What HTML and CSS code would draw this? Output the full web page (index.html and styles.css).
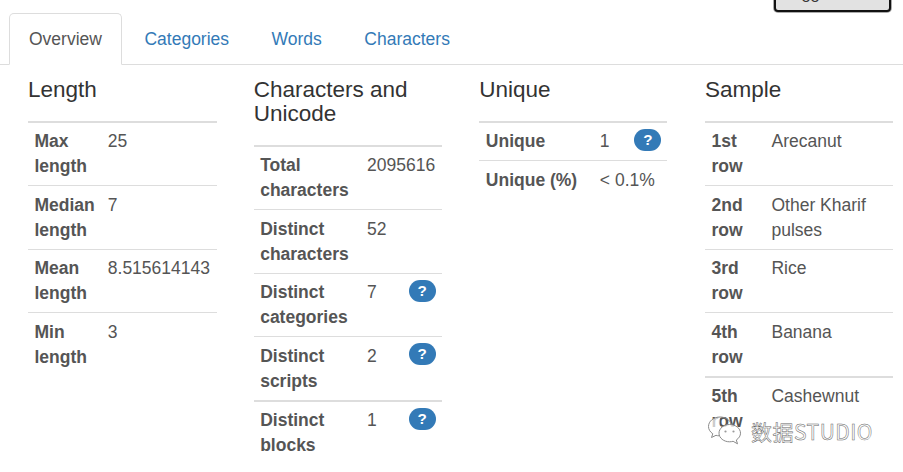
FILE: index.html
```html
<!DOCTYPE html>
<html lang="en">
<head>
<meta charset="utf-8">
<title>Overview</title>
<link rel="stylesheet" href="styles.css">
</head>
<body>
<div class="page">
  <div class="corner-button"><span class="corner-text">88</span></div>
  <nav class="tabs">
    <a class="tab active">Overview</a>
    <a class="tab">Categories</a>
    <a class="tab">Words</a>
    <a class="tab">Characters</a>
  </nav>
  <main class="columns">
    <section>
      <h4>Length</h4>
      <table>
        <tr><th>Max length</th><td>25</td></tr>
        <tr><th>Median length</th><td>7</td></tr>
        <tr><th>Mean length</th><td>8.515614143</td></tr>
        <tr><th>Min length</th><td>3</td></tr>
      </table>
    </section>
    <section>
      <h4>Characters and Unicode</h4>
      <table class="chars">
        <tr><th>Total characters</th><td colspan="2">2095616</td></tr>
        <tr><th>Distinct characters</th><td colspan="2">52</td></tr>
        <tr><th>Distinct categories</th><td>7</td><td class="help"><span class="badge">?</span></td></tr>
        <tr><th>Distinct scripts</th><td>2</td><td class="help"><span class="badge">?</span></td></tr>
        <tr class="thick"><th>Distinct blocks</th><td>1</td><td class="help"><span class="badge">?</span></td></tr>
      </table>
    </section>
    <section>
      <h4>Unique</h4>
      <table class="unique">
        <tr><th>Unique</th><td>1</td><td class="help"><span class="badge">?</span></td></tr>
        <tr><th>Unique (%)</th><td colspan="2">&lt; 0.1%</td></tr>
      </table>
    </section>
    <section>
      <h4>Sample</h4>
      <table class="sample">
        <tr><th>1st row</th><td>Arecanut</td></tr>
        <tr><th>2nd row</th><td>Other Kharif pulses</td></tr>
        <tr><th>3rd row</th><td>Rice</td></tr>
        <tr><th>4th row</th><td>Banana</td></tr>
        <tr class="thick"><th>5th row</th><td>Cashewnut</td></tr>
      </table>
    </section>
  </main>
  <div class="watermark">
    <svg class="wm-icon" width="36" height="34" viewBox="0 0 36 34" fill="none">
      <path d="M13 3C6.500 3 1.500 7.300 1.500 12.500C1.500 15.500 3.200 18 5.800 19.800L4.500 23.500L9 21.300C10 21.600 11 21.800 12 21.800" fill="#fff" fill-opacity=".7" stroke="#8a8a8a" stroke-width="1"/>
      <path d="M13 3C18.500 3 23 6 24.300 10.300" stroke="#8a8a8a" stroke-width="1"/>
      <path d="M22.500 10.500C16.800 10.500 12 14.300 12 19.200C12 24 16.800 27.800 22.500 27.800C23.800 27.800 25 27.600 26.100 27.300L30.500 29.800L29.300 26C32 24.200 33.500 21.800 33.500 19.200C33.500 14.300 28.500 10.500 22.500 10.500Z" fill="#fff" fill-opacity=".8" stroke="#8a8a8a" stroke-width="1"/>
      <circle cx="18.500" cy="17.500" r="1.100" fill="#9a9a9a"/>
      <circle cx="26.500" cy="17.500" r="1.100" fill="#9a9a9a"/>
    </svg>
    <span class="wm-text">数据STUDIO</span>
  </div>
</div>
</body>
</html>
```
FILE: styles.css
```css
* { box-sizing: border-box; }
html, body { margin: 0; background: #fff; }
body {
  font-family: "Liberation Sans", Arial, sans-serif;
  font-size: 17.5px;
  line-height: 25px;
  color: #555;
  overflow: hidden;
  height: 472px;
}
.page { position: relative; width: 903px; height: 472px; overflow: hidden; padding-top: 13px; }

.corner-button {
  position: absolute;
  left: 774px;
  top: -20px;
  width: 117px;
  height: 32px;
  padding-top: 2px;
  background: #e2e2e2;
  border: 2px solid #111;
  border-radius: 4px;
  box-shadow: 0 0 0 1px #aaa;
  text-align: center;
  font-size: 16px;
  line-height: 26px;
  color: #333;
}
.corner-text { display: inline-block; transform: translateX(-22px); }

.tabs { display: flex; height: 52px; padding-left: 9px; border-bottom: 1px solid #ddd; }
.tab {
  height: 52px;
  margin-right: 2.500px;
  padding: 13px 19px 0;
  border: 1px solid transparent;
  color: #337ab7;
  white-space: nowrap;
}
.tab.active {
  color: #555;
  background: #fff;
  border-color: #ddd #ddd #fff;
  border-radius: 5px 5px 0 0;
}

.columns {
  display: grid;
  grid-template-columns: repeat(4, 188px);
  column-gap: 37.670px;
  padding-left: 28px;
}
h4 {
  margin: 13px 0 0;
  font-size: 22.500px;
  line-height: 24px;
  font-weight: 400;
  color: #333;
}
table { width: 188px; margin-top: 19px; border-collapse: collapse; border-top: 2px solid #ddd; }
th, td { padding: 6.600px 6.500px 6.100px; vertical-align: top; text-align: left; border-top: 1px solid #ddd; }
tr:first-child th, tr:first-child td { border-top: 0; padding-top: 6px; }
th { font-weight: 700; }
.thick th, .thick td { border-top-width: 2px; padding-top: 5.900px; }
section:nth-child(1) th { width: 73px; }
section:nth-child(2) th { width: 107px; }
section:nth-child(3) th { width: 114px; }
section:nth-child(4) th { width: 60px; }
tr .help { width: 40px; padding-left: 0; padding-right: 6px; padding-top: 6px; text-align: right; }
.badge {
  display: inline-block;
  width: 27px;
  height: 22px;
  border-radius: 11px;
  background: #337ab7;
  color: #fff;
  font-size: 15.200px;
  font-weight: 700;
  line-height: 22px;
  text-align: center;
  vertical-align: top;
}
.watermark {
  position: absolute;
  left: 707px;
  top: 414px;
  display: flex;
  align-items: center;
  gap: 8px;
}
.wm-text {
  font-family: "Noto Sans CJK SC", "Noto Sans", sans-serif;
  font-size: 21px;
  line-height: 34px;
  color: #fff;
  -webkit-text-stroke: 0.500px #666;
  letter-spacing: 0.500px;
}
```
